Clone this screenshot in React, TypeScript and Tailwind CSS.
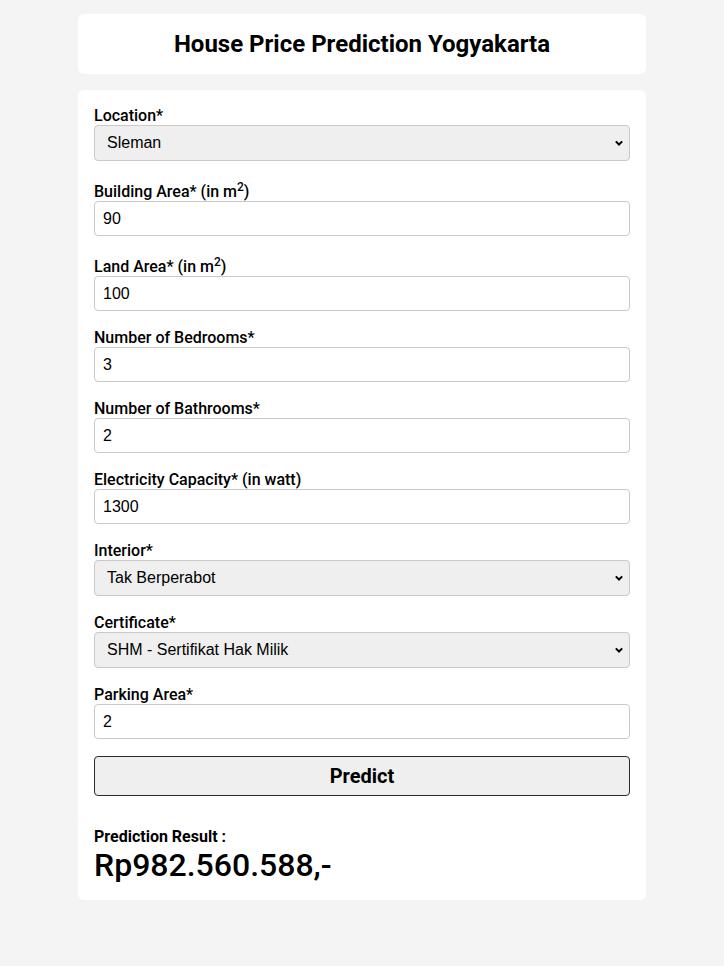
import React from "react";

const roboto = { fontFamily: "Roboto, 'Noto Sans', sans-serif" };

function Chevron() {
  return (
    <svg
      className="pointer-events-none absolute right-[6px] top-1/2 -translate-y-1/2"
      width="10"
      height="10"
      viewBox="0 0 10 10"
    >
      <path d="M1.8 3.4 L5 6.5 L8.2 3.4" fill="none" stroke="#000" strokeWidth="2" />
    </svg>
  );
}

function Label({ children, sup }: { children: React.ReactNode; sup?: boolean }) {
  return (
    <label
      className={`flex items-end font-medium text-[16px] leading-[19px] text-black ${sup ? "h-[23px]" : "h-[19px]"}`}
    >
      <span>{children}</span>
    </label>
  );
}

function TextField({ label, value, sup }: { label: React.ReactNode; value: string; sup?: boolean }) {
  return (
    <div className="mb-[17px]">
      <Label sup={sup}>{label}</Label>
      <input
        type="text"
        defaultValue={value}
        className="block w-full h-[35px] px-2 border border-[#c9c9c9] rounded-[4px] bg-white text-[16px] text-black outline-none"
        style={{ fontFamily: "'Liberation Sans', Arial, sans-serif" }}
      />
    </div>
  );
}

function SelectField({ label, value, options }: { label: string; value: string; options: string[] }) {
  return (
    <div className="mb-[17px]">
      <Label>{label}</Label>
      <div className="relative">
        <select
          defaultValue={value}
          className="block w-full h-[36px] pl-3 pr-6 appearance-none border border-[#c9c9c9] rounded-[4px] bg-[#efefef] text-[16px] text-black outline-none"
          style={{ fontFamily: "'Liberation Sans', Arial, sans-serif" }}
        >
          {options.map((o) => (
            <option key={o} value={o}>
              {o}
            </option>
          ))}
        </select>
        <Chevron />
      </div>
    </div>
  );
}

function M2() {
  return (
    <>
      {" "}(in m<sup className="relative top-[-6px] text-[12px] align-baseline leading-none">2</sup>)
    </>
  );
}

export default function App() {
  return (
    <div className="min-h-[966px] w-full bg-[#f4f4f4] pt-[14px] pb-10" style={roboto}>
      <div className="mx-auto w-[568px]">
        <div className="bg-white rounded-[6px] h-[60px] flex items-center justify-center">
          <h1 className="text-[24px] font-bold text-black leading-none">House Price Prediction Yogyakarta</h1>
        </div>
        <div className="mt-4 bg-white rounded-[6px] px-4 pt-4 pb-4">
          <SelectField
            label="Location*"
            value="Sleman"
            options={["Sleman", "Bantul", "Yogyakarta", "Kulon Progo", "Gunung Kidul"]}
          />
          <TextField sup label={<>Building Area*<M2 /></>} value="90" />
          <TextField sup label={<>Land Area*<M2 /></>} value="100" />
          <TextField label="Number of Bedrooms*" value="3" />
          <TextField label="Number of Bathrooms*" value="2" />
          <TextField label="Electricity Capacity* (in watt)" value="1300" />
          <SelectField
            label="Interior*"
            value="Tak Berperabot"
            options={["Tak Berperabot", "Semi Furnished", "Furnished"]}
          />
          <SelectField
            label="Certificate*"
            value="SHM - Sertifikat Hak Milik"
            options={["SHM - Sertifikat Hak Milik", "HGB - Hak Guna Bangunan", "Lainnya"]}
          />
          <TextField label="Parking Area*" value="2" />
          <button
            type="button"
            className="block w-full h-[40px] border border-[#2a2a2a] rounded-[4px] bg-[#efefef] text-[20px] font-bold text-black"
          >
            Predict
          </button>
          <div className="mt-[31px]">
            <div className="text-[16px] font-bold leading-[19px] text-black">Prediction Result :</div>
            <div className="text-[32px] font-medium leading-[38px] text-black">Rp982.560.588,-</div>
          </div>
        </div>
      </div>
    </div>
  );
}
